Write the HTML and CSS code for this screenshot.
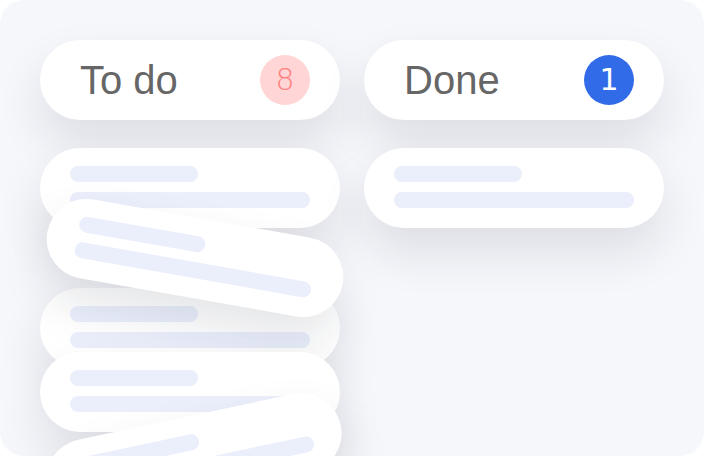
FILE: index.html
```html
<!DOCTYPE html>
<html>
<head>
<meta charset="utf-8">
<link rel="stylesheet" href="styles.css">
</head>
<body>
<div class="board">
  <div class="column">
    <div class="header">
      <span class="title">To do</span>
      <span class="badge badge-pink">8</span>
    </div>
    <div class="card"><div class="line short"></div><div class="line long"></div></div>
    <div class="card card-tilt-down"><div class="line short"></div><div class="line long"></div></div>
    <div class="card card-after-tilt"><div class="line short"></div><div class="line long"></div></div>
    <div class="card card-overlap"><div class="line short"></div><div class="line long"></div></div>
    <div class="card card-tilt-up"><div class="line short"></div><div class="line long"></div></div>
  </div>
  <div class="column">
    <div class="header">
      <span class="title">Done</span>
      <span class="badge badge-blue">1</span>
    </div>
    <div class="card"><div class="line short"></div><div class="line long"></div></div>
  </div>
</div>
</body>
</html>
```
FILE: styles.css
```css
html, body {
  margin: 0;
  padding: 0;
  background: #ffffff;
}
body {
  width: 704px;
  height: 456px;
  overflow: hidden;
  font-family: "Liberation Sans", Arial, sans-serif;
}
.board {
  width: 704px;
  height: 456px;
  box-sizing: border-box;
  background: #f6f7fb;
  border-radius: 24px;
  overflow: hidden;
  padding: 40px 40px 0 40px;
  display: flex;
  gap: 24px;
  align-items: flex-start;
}
.column {
  width: 300px;
  display: flex;
  flex-direction: column;
}
.header {
  height: 80px;
  border-radius: 40px;
  background: #ffffff;
  box-sizing: border-box;
  padding: 0 30px 0 40px;
  display: flex;
  align-items: center;
  justify-content: space-between;
  box-shadow: 0 24px 48px rgba(20, 25, 50, 0.11);
  position: relative;
}
.title {
  font-size: 40px;
  color: #666666;
  line-height: 1;
}
.badge {
  width: 50px;
  height: 50px;
  border-radius: 50%;
  display: flex;
  align-items: center;
  justify-content: center;
  font-family: "DejaVu Sans", sans-serif;
  font-size: 30px;
  line-height: 1;
}
.badge-pink {
  background: #ffd5d5;
  color: #ff8080;
  font-weight: 300;
}
.badge-blue {
  background: #316be8;
  color: #ffffff;
}
.card {
  height: 80px;
  border-radius: 40px;
  background: #ffffff;
  box-sizing: border-box;
  padding: 18px 30px;
  display: flex;
  flex-direction: column;
  gap: 10px;
  box-shadow: 0 24px 48px rgba(20, 25, 50, 0.11);
  margin-top: 28px;
  position: relative;
  flex-shrink: 0;
}
.line {
  height: 16px;
  border-radius: 8px;
  background: #ebeffc;
}
.line.short { width: 128px; }
.line.long { width: 240px; }
.card-tilt-down {
  margin-top: -10px;
  transform: translate(5px, 0) rotate(10deg);
  z-index: 2;
}
.card-after-tilt {
  margin-top: -10px;
  z-index: 1;
}
.card-overlap {
  margin-top: -16px;
  z-index: 2;
}
.card-tilt-up {
  margin-top: -16px;
  transform: translate(4px, 0) rotate(-12deg);
  z-index: 3;
}
```
